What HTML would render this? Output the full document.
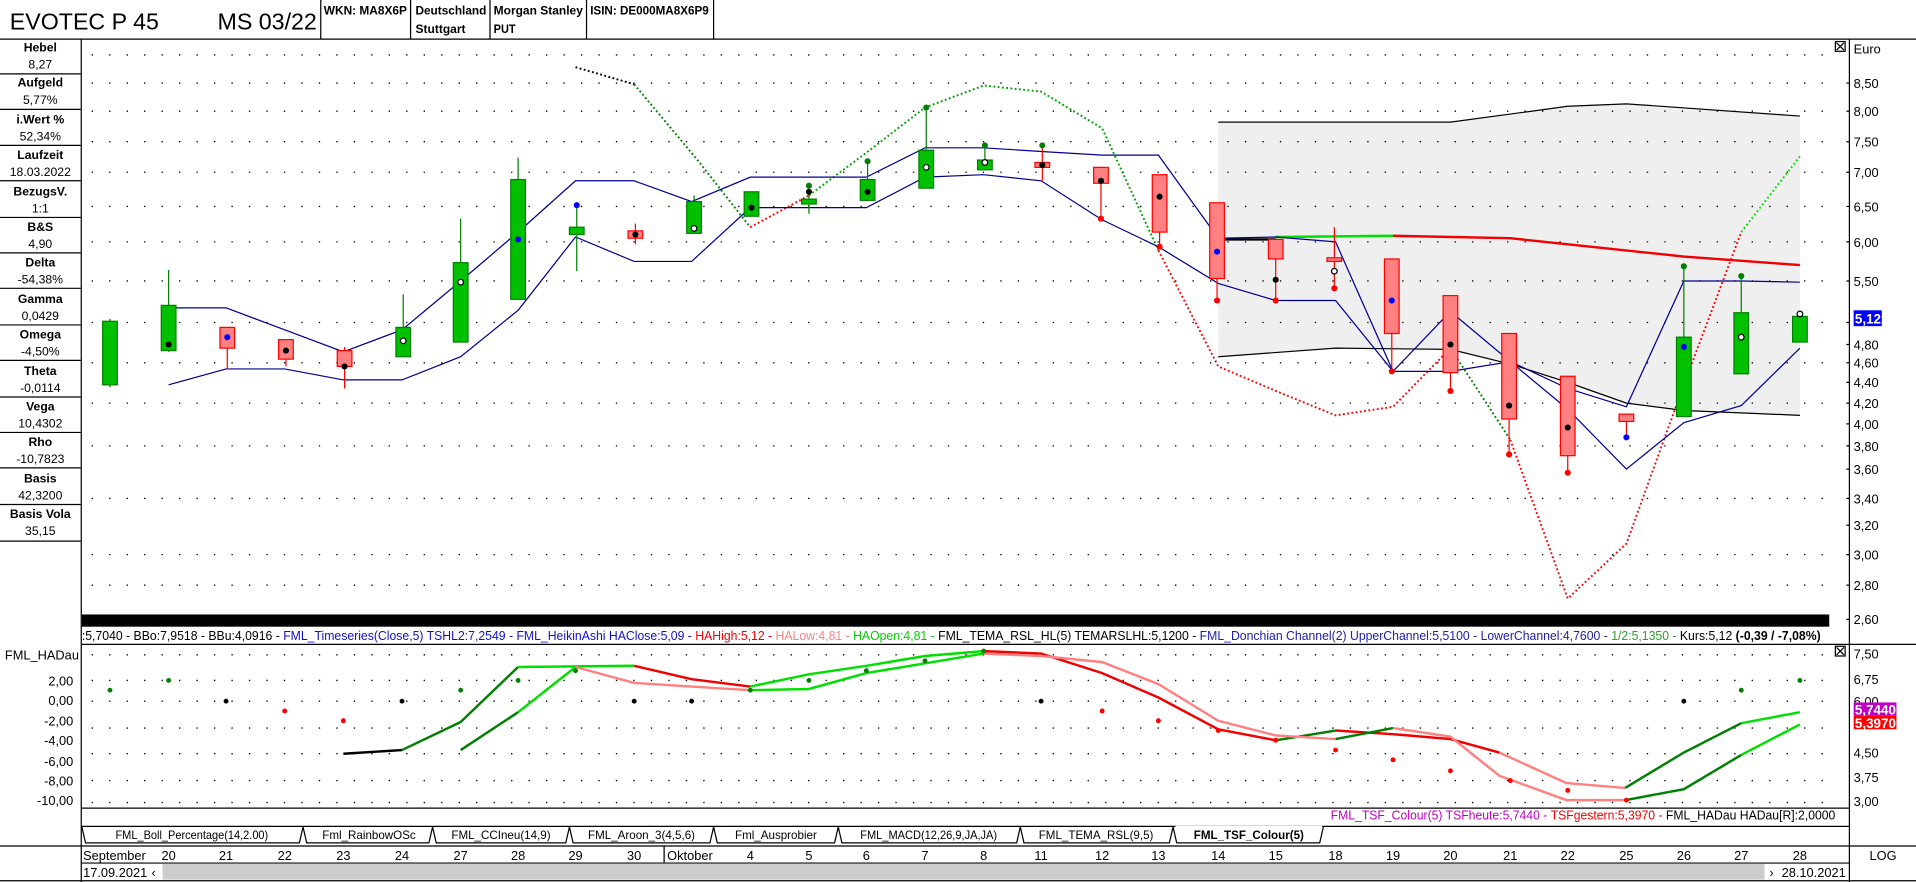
<!DOCTYPE html>
<html><head><meta charset="utf-8"><style>
html,body{margin:0;padding:0;background:#fff;overflow:hidden}
svg{display:block}
text{font-family:"Liberation Sans",Arial,sans-serif}
.n{font-family:"Liberation Sans Narrow","Liberation Sans",sans-serif}
</style></head><body>
<svg width="1916" height="882" viewBox="0 0 1568 722" preserveAspectRatio="none" xmlns="http://www.w3.org/2000/svg">
<rect width="1568" height="722" fill="#fff"/>
<!-- header -->
<text x="8" y="24" font-size="19">EVOTEC P 45</text>
<text x="178" y="24" font-size="19">MS 03/22</text>
<g stroke="#000" stroke-width="1">
<line x1="262.5" y1="0" x2="262.5" y2="32"/><line x1="336" y1="0" x2="336" y2="32"/><line x1="401" y1="0" x2="401" y2="32"/><line x1="480" y1="0" x2="480" y2="32"/><line x1="584" y1="0" x2="584" y2="32"/>
<line x1="0" y1="32" x2="1568" y2="32"/>
</g>
<g font-size="10" font-weight="bold" class="n">
<text x="265" y="12" textLength="68" lengthAdjust="spacingAndGlyphs">WKN: MA8X6P</text>
<text x="340" y="12" textLength="58" lengthAdjust="spacingAndGlyphs">Deutschland</text><text x="340" y="27" textLength="41" lengthAdjust="spacingAndGlyphs">Stuttgart</text>
<text x="404" y="12" textLength="73" lengthAdjust="spacingAndGlyphs">Morgan Stanley</text><text x="404" y="27" textLength="18" lengthAdjust="spacingAndGlyphs">PUT</text>
<text x="483" y="12" textLength="97" lengthAdjust="spacingAndGlyphs">ISIN: DE000MA8X6P9</text>
</g>
<!-- left panel -->
<line x1="66.5" y1="32" x2="66.5" y2="722" stroke="#000"/>
<g font-size="10" text-anchor="middle" class="n">
<g font-weight="bold">
<text x="33" y="42">Hebel</text><text x="33" y="71">Aufgeld</text><text x="33" y="101">i.Wert %</text><text x="33" y="130">Laufzeit</text><text x="33" y="160">BezugsV.</text><text x="33" y="189">B&amp;S</text><text x="33" y="218">Delta</text><text x="33" y="248">Gamma</text><text x="33" y="277">Omega</text><text x="33" y="307">Theta</text><text x="33" y="336">Vega</text><text x="33" y="365">Rho</text><text x="33" y="395">Basis</text><text x="33" y="424">Basis Vola</text>
</g>
<text x="33" y="56">8,27</text><text x="33" y="85">5,77%</text><text x="33" y="115">52,34%</text><text x="33" y="144">18.03.2022</text><text x="33" y="174">1:1</text><text x="33" y="203">4,90</text><text x="33" y="232">-54,38%</text><text x="33" y="262">0,0429</text><text x="33" y="291">-4,50%</text><text x="33" y="321">-0,0114</text><text x="33" y="350">10,4302</text><text x="33" y="379">-10,7823</text><text x="33" y="409">42,3200</text><text x="33" y="438">35,15</text>
</g>
<g stroke="#000">
<line x1="0" y1="60.5" x2="66" y2="60.5"/><line x1="0" y1="89.5" x2="66" y2="89.5"/><line x1="0" y1="119" x2="66" y2="119"/><line x1="0" y1="148" x2="66" y2="148"/><line x1="0" y1="178" x2="66" y2="178"/><line x1="0" y1="207" x2="66" y2="207"/><line x1="0" y1="236" x2="66" y2="236"/><line x1="0" y1="266" x2="66" y2="266"/><line x1="0" y1="295" x2="66" y2="295"/><line x1="0" y1="325" x2="66" y2="325"/><line x1="0" y1="354" x2="66" y2="354"/><line x1="0" y1="383" x2="66" y2="383"/><line x1="0" y1="413" x2="66" y2="413"/><line x1="0" y1="443" x2="66" y2="443"/>
</g>
<!-- bollinger fill -->
<polygon points="997,100 1187,100 1283,87 1331,85 1473,95 1473,340 1378,336 1331,330 1283,313 1236,298 1187,286 1093,285 997,292" fill="#efefef"/>
<!-- dot grid price -->
<g stroke="#000" stroke-width="1.1" stroke-dasharray="1.1 13.2">
<line x1="75" y1="45" x2="1500" y2="45"/><line x1="75" y1="68" x2="1500" y2="68"/><line x1="75" y1="91" x2="1500" y2="91"/><line x1="75" y1="116" x2="1500" y2="116"/><line x1="75" y1="141" x2="1500" y2="141"/><line x1="75" y1="169" x2="1500" y2="169"/><line x1="75" y1="198" x2="1500" y2="198"/><line x1="75" y1="230" x2="1500" y2="230"/><line x1="75" y1="264" x2="1500" y2="264"/><line x1="75" y1="297" x2="1500" y2="297"/><line x1="75" y1="330" x2="1500" y2="330"/><line x1="75" y1="365" x2="1500" y2="365"/><line x1="75" y1="408" x2="1500" y2="408"/><line x1="75" y1="454" x2="1500" y2="454"/><line x1="75" y1="479" x2="1500" y2="479"/>
</g>
<!-- bollinger lines -->
<polyline points="997,100 1187,100 1283,87 1331,85 1473,95" fill="none" stroke="#000"/>
<polyline points="997,292 1093,285 1187,286 1236,298 1283,313 1331,330 1378,336 1473,340" fill="none" stroke="#000"/>
<polyline points="997,196 1044,196" fill="none" stroke="#000" stroke-width="2"/>
<polyline points="1044,194 1140,193" fill="none" stroke="#00e000" stroke-width="2"/>
<polyline points="1140,193 1236,195 1283,200 1378,210 1473,217" fill="none" stroke="#f00000" stroke-width="2"/>
<!-- dotted TSF -->
<g fill="none" stroke-width="1.6" stroke-dasharray="1.5 2">
<polyline points="471,55 519,69" stroke="#000"/>
<polyline points="519,69 570,130 614,186" stroke="#008000"/>
<polyline points="614,186 662,160" stroke="#ff0000"/>
<polyline points="662,160 709,125 757,88 805,70 852,75 902,105 948,205" stroke="#00a000"/>
<polyline points="948,205 997,300 1044,320 1093,340 1140,333 1187,285" stroke="#ff0000"/>
<polyline points="1187,285 1236,360" stroke="#008000"/>
<polyline points="1236,360 1283,490 1331,445 1378,315 1425,190" stroke="#ff0000"/>
<polyline points="1425,190 1473,128" stroke="#00e000"/>
</g>
<!-- donchian -->
<polyline points="138,252 185,252 233,270 281,288 329,270 377,230 424,190 471,148 519,148 566,165 614,145 662,145 709,145 757,121 805,121 852,124 902,127 948,127 997,195 1044,194 1093,198 1140,304 1187,255 1236,296 1283,318 1331,333 1378,230 1425,230 1473,231" fill="none" stroke="#000090"/>
<polyline points="138,315 185,302 233,302 281,311 329,311 377,292 424,254 471,194 519,214 566,214 614,170 662,170 709,170 757,145 805,143 852,148 902,180 948,202 997,232 1044,246 1093,246 1140,304 1187,304 1236,296 1283,335 1331,384 1378,346 1425,332 1473,285" fill="none" stroke="#000090"/>
<!-- candles -->
<g stroke-width="1">
<g stroke="#008000" fill="#00c000">
<line x1="90" y1="261" x2="90" y2="317"/><rect x="84" y="263" width="12" height="52"/>
<line x1="138" y1="221" x2="138" y2="288"/><rect x="132" y="250" width="12" height="37"/>
<line x1="330" y1="241" x2="330" y2="292"/><rect x="324" y="268" width="12" height="24"/>
<line x1="377" y1="179" x2="377" y2="280"/><rect x="371" y="215" width="12" height="65"/>
<line x1="424" y1="129" x2="424" y2="245"/><rect x="418" y="147" width="12" height="98"/>
<line x1="472" y1="167" x2="472" y2="222"/><rect x="466" y="186" width="12" height="6"/>
<line x1="568" y1="160" x2="568" y2="191"/><rect x="562" y="165" width="12" height="26"/>
<rect x="609" y="157" width="12" height="20"/>
<line x1="662" y1="150" x2="662" y2="175"/><rect x="656" y="163" width="12" height="4"/>
<line x1="710" y1="132" x2="710" y2="164"/><rect x="704" y="147" width="12" height="17"/>
<line x1="758" y1="87" x2="758" y2="154"/><rect x="752" y="123" width="12" height="31"/>
<line x1="806" y1="118" x2="806" y2="139"/><rect x="800" y="131" width="12" height="8"/>
<line x1="1378" y1="218" x2="1378" y2="341"/><rect x="1372" y="276" width="12" height="65"/>
<line x1="1425" y1="226" x2="1425" y2="306"/><rect x="1419" y="256" width="12" height="50"/>
<rect x="1467" y="259" width="12" height="21"/>
</g>
<g stroke="#ff0000" fill="#ff8080">
<line x1="186" y1="268" x2="186" y2="302"/><rect x="180" y="268" width="12" height="17"/>
<line x1="234" y1="278" x2="234" y2="300"/><rect x="228" y="278" width="12" height="16"/>
<line x1="282" y1="284" x2="282" y2="318"/><rect x="276" y="287" width="12" height="13"/>
<line x1="520" y1="183" x2="520" y2="200"/><rect x="514" y="189" width="12" height="6"/>
<line x1="853" y1="118" x2="853" y2="148"/><rect x="847" y="133" width="12" height="4"/>
<line x1="901" y1="137" x2="901" y2="179"/><rect x="895" y="137" width="12" height="13"/>
<line x1="949" y1="143" x2="949" y2="202"/><rect x="943" y="143" width="12" height="47"/>
<line x1="996" y1="166" x2="996" y2="246"/><rect x="990" y="166" width="12" height="62"/>
<line x1="1044" y1="196" x2="1044" y2="246"/><rect x="1038" y="196" width="12" height="16"/>
<line x1="1092" y1="186" x2="1092" y2="236"/><rect x="1086" y="211" width="12" height="3"/>
<line x1="1139" y1="212" x2="1139" y2="304"/><rect x="1133" y="212" width="12" height="61"/>
<line x1="1187" y1="242" x2="1187" y2="320"/><rect x="1181" y="242" width="12" height="63"/>
<line x1="1235" y1="273" x2="1235" y2="372"/><rect x="1229" y="273" width="12" height="70"/>
<line x1="1283" y1="308" x2="1283" y2="387"/><rect x="1277" y="308" width="12" height="65"/>
<line x1="1331" y1="339" x2="1331" y2="358"/><rect x="1325" y="339" width="12" height="6"/>
</g>
</g>
<!-- dots -->
<g>
<circle cx="138" cy="282" r="2.5" fill="#000"/><circle cx="186" cy="276" r="2.5" fill="#00f"/><circle cx="234" cy="287" r="2.5" fill="#000"/><circle cx="282" cy="300" r="2.5" fill="#000"/>
<circle cx="330" cy="279" r="2.3" fill="#fff" stroke="#000"/><circle cx="377" cy="231" r="2.3" fill="#fff" stroke="#000"/><circle cx="424" cy="196" r="2.5" fill="#00f"/><circle cx="472" cy="168" r="2.5" fill="#00f"/>
<circle cx="520" cy="192" r="2.5" fill="#000"/><circle cx="568" cy="187" r="2.3" fill="#fff" stroke="#000"/><circle cx="615" cy="170" r="2.5" fill="#000"/><circle cx="662" cy="157" r="2.5" fill="#000"/><circle cx="662" cy="152" r="2.5" fill="#008000"/>
<circle cx="710" cy="157" r="2.5" fill="#000"/><circle cx="710" cy="132" r="2.5" fill="#008000"/><circle cx="758" cy="137" r="2.3" fill="#fff" stroke="#000"/><circle cx="758" cy="88" r="2.5" fill="#008000"/>
<circle cx="806" cy="133" r="2.3" fill="#fff" stroke="#000"/><circle cx="806" cy="119" r="2.5" fill="#008000"/><circle cx="853" cy="135" r="2.5" fill="#000"/><circle cx="853" cy="119" r="2.5" fill="#008000"/>
<circle cx="901" cy="148" r="2.5" fill="#000"/><circle cx="901" cy="179" r="2.5" fill="#f00"/><circle cx="949" cy="161" r="2.5" fill="#000"/><circle cx="949" cy="202" r="2.5" fill="#f00"/>
<circle cx="996" cy="206" r="2.5" fill="#00f"/><circle cx="996" cy="246" r="2.5" fill="#f00"/><circle cx="1044" cy="229" r="2.5" fill="#000"/><circle cx="1044" cy="246" r="2.5" fill="#f00"/>
<circle cx="1092" cy="222" r="2.3" fill="#fff" stroke="#000"/><circle cx="1092" cy="236" r="2.5" fill="#f00"/><circle cx="1139" cy="246" r="2.5" fill="#00f"/><circle cx="1139" cy="304" r="2.5" fill="#f00"/>
<circle cx="1187" cy="282" r="2.5" fill="#000"/><circle cx="1187" cy="320" r="2.5" fill="#f00"/><circle cx="1235" cy="332" r="2.5" fill="#000"/><circle cx="1235" cy="372" r="2.5" fill="#f00"/>
<circle cx="1283" cy="350" r="2.5" fill="#000"/><circle cx="1283" cy="387" r="2.5" fill="#f00"/><circle cx="1331" cy="358" r="2.5" fill="#00f"/>
<circle cx="1378" cy="284" r="2.5" fill="#00f"/><circle cx="1378" cy="218" r="2.5" fill="#008000"/><circle cx="1425" cy="276" r="2.3" fill="#fff" stroke="#000"/><circle cx="1425" cy="226" r="2.5" fill="#008000"/><circle cx="1473" cy="257" r="2.3" fill="#fff" stroke="#000"/>
</g>
<!-- black bar and legend -->
<rect x="67" y="503" width="1430" height="10" fill="#000"/>
<text x="67" y="524" font-size="10.5" textLength="1423" lengthAdjust="spacingAndGlyphs"><tspan fill="#000">:5,7040 - BBo:7,9518 - BBu:4,0916 - </tspan><tspan fill="#1010d0">FML_Timeseries(Close,5) TSHL2:7,2549 - FML_HeikinAshi HAClose:5,09 - </tspan><tspan fill="#f00000">HAHigh:5,12 - </tspan><tspan fill="#ff8080">HALow:4,81 - </tspan><tspan fill="#00d000">HAOpen:4,81 - </tspan><tspan fill="#000">FML_TEMA_RSL_HL(5) TEMARSLHL:5,1200 - </tspan><tspan fill="#2020b0">FML_Donchian Channel(2) UpperChannel:5,5100 - LowerChannel:4,7600 - </tspan><tspan fill="#30a030">1/2:5,1350 - </tspan><tspan fill="#000">Kurs:5,12 </tspan><tspan fill="#000" font-weight="bold">(-0,39 / -7,08%)</tspan></text>
<line x1="67" y1="527.5" x2="1568" y2="527.5" stroke="#000"/>
<!-- right axis -->
<line x1="1513.5" y1="32" x2="1513.5" y2="722" stroke="#000"/>
<g stroke="#000"><rect x="1502" y="34" width="8" height="8" fill="#fff"/><path d="M1503,35 L1509,41 M1509,35 L1503,41"/><rect x="1502" y="529" width="8" height="8" fill="#fff"/><path d="M1503,530 L1509,536 M1509,530 L1503,536"/></g>
<g font-size="10.5" fill="#000">
<text x="1517" y="44">Euro</text>
<text x="1517" y="72">8,50</text><text x="1517" y="95">8,00</text><text x="1517" y="120">7,50</text><text x="1517" y="145">7,00</text><text x="1517" y="173">6,50</text><text x="1517" y="202">6,00</text><text x="1517" y="234">5,50</text><text x="1517" y="286">4,80</text><text x="1517" y="301">4,60</text><text x="1517" y="317">4,40</text><text x="1517" y="334">4,20</text><text x="1517" y="351">4,00</text><text x="1517" y="369">3,80</text><text x="1517" y="388">3,60</text><text x="1517" y="412">3,40</text><text x="1517" y="434">3,20</text><text x="1517" y="458">3,00</text><text x="1517" y="483">2,80</text><text x="1517" y="511">2,60</text>
</g>
<g stroke="#000"><path d="M1511,68H1514 M1511,91H1514 M1511,116H1514 M1511,141H1514 M1511,169H1514 M1511,198H1514 M1511,230H1514 M1511,264H1514 M1511,282H1514 M1511,297H1514 M1511,313H1514 M1511,330H1514 M1511,347H1514 M1511,365H1514 M1511,384H1514 M1511,408H1514 M1511,430H1514 M1511,454H1514 M1511,479H1514 M1511,507H1514"/></g>
<rect x="1517" y="254" width="23" height="13" fill="#0000ff"/>
<text x="1518" y="265" font-size="11" font-weight="bold" fill="#fff">5,12</text>
<!-- lower panel -->
<text x="4" y="540" font-size="10.5">FML_HADau</text>
<g font-size="10.5" text-anchor="end">
<text x="60" y="561">2,00</text><text x="60" y="577">0,00</text><text x="60" y="594">-2,00</text><text x="60" y="610">-4,00</text><text x="60" y="627">-6,00</text><text x="60" y="643">-8,00</text><text x="60" y="659">-10,00</text>
</g>
<g font-size="10.5">
<text x="1517" y="539">7,50</text><text x="1517" y="560">6,75</text><text x="1517" y="578">6,00</text><text x="1517" y="620">4,50</text><text x="1517" y="640">3,75</text><text x="1517" y="660">3,00</text>
</g>
<rect x="1517" y="575" width="35" height="11" fill="#c000c0"/><text x="1518" y="585" font-size="11" font-weight="bold" fill="#fff">5,7440</text>
<rect x="1517" y="586" width="35" height="11" fill="#ff0000"/><text x="1518" y="596" font-size="11" font-weight="bold" fill="#fff">5,3970</text>
<g stroke="#000" stroke-width="1.1" stroke-dasharray="1.1 13.2">
<line x1="75" y1="536" x2="1500" y2="536"/><line x1="75" y1="557" x2="1500" y2="557"/><line x1="75" y1="574" x2="1500" y2="574"/><line x1="75" y1="596" x2="1500" y2="596"/><line x1="75" y1="617" x2="1500" y2="617"/><line x1="75" y1="639" x2="1500" y2="639"/><line x1="75" y1="657" x2="1500" y2="657"/>
</g>
<g fill="none" stroke-width="2">
<polyline points="281,617 329,614" stroke="#000"/>
<polyline points="329,614 377,591 424,546" stroke="#008000"/>
<polyline points="424,546 519,545" stroke="#00e000"/>
<polyline points="519,545 566,556 614,562" stroke="#f00000"/>
<polyline points="614,562 662,552 709,545 757,537 805,533" stroke="#00e000"/>
<polyline points="805,533 852,535 902,551 948,571 997,597 1044,606" stroke="#f00000"/>
<polyline points="1044,606 1093,598" stroke="#008000"/>
<polyline points="1093,598 1140,601 1187,605 1227,616" stroke="#f00000"/>
<polyline points="1227,616 1282,641 1330,645" stroke="#ff8080"/>
<polyline points="1330,645 1378,616 1425,592" stroke="#008000"/>
<polyline points="1425,592 1473,583" stroke="#00e000"/>
<polyline points="377,614 424,583" stroke="#008000"/>
<polyline points="424,583 471,546" stroke="#00e000"/>
<polyline points="471,546 519,559 566,562 614,565" stroke="#ff8080"/>
<polyline points="614,565 662,564 709,551 757,543 805,535" stroke="#00e000"/>
<polyline points="805,535 852,537 902,542 948,560 997,590 1044,602 1093,605" stroke="#ff8080"/>
<polyline points="1093,605 1140,596" stroke="#008000"/>
<polyline points="1140,596 1187,603 1227,635 1282,655 1330,655" stroke="#ff8080"/>
<polyline points="1330,655 1378,646 1425,618" stroke="#008000"/>
<polyline points="1425,618 1473,593" stroke="#00e000"/>
</g>
<g>
<circle cx="90" cy="565" r="2" fill="#008000"/><circle cx="138" cy="557" r="2" fill="#008000"/><circle cx="185" cy="574" r="2" fill="#000"/><circle cx="233" cy="582" r="2" fill="#f00"/><circle cx="281" cy="590" r="2" fill="#f00"/><circle cx="329" cy="574" r="2" fill="#000"/><circle cx="377" cy="565" r="2" fill="#008000"/><circle cx="424" cy="557" r="2" fill="#008000"/><circle cx="471" cy="549" r="2" fill="#008000"/><circle cx="519" cy="574" r="2" fill="#000"/><circle cx="566" cy="574" r="2" fill="#000"/><circle cx="614" cy="565" r="2" fill="#008000"/><circle cx="662" cy="557" r="2" fill="#008000"/><circle cx="709" cy="549" r="2" fill="#008000"/><circle cx="757" cy="541" r="2" fill="#008000"/><circle cx="805" cy="533" r="2" fill="#008000"/><circle cx="852" cy="574" r="2" fill="#000"/><circle cx="902" cy="582" r="2" fill="#f00"/><circle cx="948" cy="590" r="2" fill="#f00"/><circle cx="997" cy="598" r="2" fill="#f00"/><circle cx="1044" cy="606" r="2" fill="#f00"/><circle cx="1093" cy="614" r="2" fill="#f00"/><circle cx="1140" cy="622" r="2" fill="#f00"/><circle cx="1187" cy="631" r="2" fill="#f00"/><circle cx="1236" cy="639" r="2" fill="#f00"/><circle cx="1283" cy="647" r="2" fill="#f00"/><circle cx="1331" cy="655" r="2" fill="#f00"/><circle cx="1378" cy="574" r="2" fill="#000"/><circle cx="1425" cy="565" r="2" fill="#008000"/><circle cx="1473" cy="557" r="2" fill="#008000"/>
</g>
<line x1="67" y1="661.5" x2="1514" y2="661.5" stroke="#000"/>
<text x="1089" y="671" font-size="10.5" textLength="413" lengthAdjust="spacingAndGlyphs"><tspan fill="#c000c0">FML_TSF_Colour(5) TSFheute:5,7440 - </tspan><tspan fill="#f00000">TSFgestern:5,3970 - </tspan><tspan fill="#000">FML_HADau HADau[R]:2,0000</tspan></text>
<!-- tabs -->
<line x1="67" y1="676.5" x2="1514" y2="676.5" stroke="#000"/>
<rect x="962" y="676" width="120" height="14" fill="#fff"/>
<g stroke="#000" fill="none">
<path d="M67,677 L70,690 L245,690 L248,677 M248,677 L251,690 L351,690 L354,677 M354,677 L357,690 L463,690 L466,677 M466,677 L469,690 L581,690 L584,677 M584,677 L587,690 L683,690 L686,677 M686,677 L689,690 L832,690 L835,677 M835,677 L838,690 L957,690 L960,677 M960,677 L963,690 L1080,690 L1083,677"/>
</g>
<g font-size="9.5" text-anchor="middle" class="n">
<text x="157" y="687" textLength="125" lengthAdjust="spacingAndGlyphs">FML_Boll_Percentage(14,2.00)</text><text x="302" y="687">Fml_RainbowOSc</text><text x="410" y="687">FML_CCIneu(14,9)</text><text x="525" y="687">FML_Aroon_3(4,5,6)</text><text x="635" y="687">Fml_Ausprobier</text><text x="760" y="687" textLength="112" lengthAdjust="spacingAndGlyphs">FML_MACD(12,26,9,JA,JA)</text><text x="897" y="687">FML_TEMA_RSL(9,5)</text><text x="1022" y="687" font-weight="bold">FML_TSF_Colour(5)</text>
</g>
<line x1="0" y1="692.5" x2="1568" y2="692.5" stroke="#000"/>
<line x1="67" y1="706.5" x2="1514" y2="706.5" stroke="#000"/>
<line x1="543.5" y1="692" x2="543.5" y2="706" stroke="#000"/>
<g font-size="10.5" class="n" text-anchor="middle">
<text x="68" y="704" text-anchor="start">September</text>
<text x="138" y="704">20</text><text x="185" y="704">21</text><text x="233" y="704">22</text><text x="281" y="704">23</text><text x="329" y="704">24</text><text x="377" y="704">27</text><text x="424" y="704">28</text><text x="471" y="704">29</text><text x="519" y="704">30</text><text x="546" y="704" text-anchor="start">Oktober</text><text x="614" y="704">4</text><text x="662" y="704">5</text><text x="709" y="704">6</text><text x="757" y="704">7</text><text x="805" y="704">8</text><text x="852" y="704">11</text><text x="902" y="704">12</text><text x="948" y="704">13</text><text x="997" y="704">14</text><text x="1044" y="704">15</text><text x="1093" y="704">18</text><text x="1140" y="704">19</text><text x="1187" y="704">20</text><text x="1236" y="704">21</text><text x="1283" y="704">22</text><text x="1331" y="704">25</text><text x="1378" y="704">26</text><text x="1425" y="704">27</text><text x="1473" y="704">28</text>
<text x="1541" y="704">LOG</text>
</g>
<rect x="133" y="707" width="1311" height="13" fill="#cccccc"/>
<g font-size="10.5" class="n">
<text x="68" y="718">17.09.2021</text><text x="124" y="718">‹</text><text x="1448" y="718">›</text><text x="1458" y="718">28.10.2021</text>
</g>
<line x1="0" y1="721" x2="1568" y2="721" stroke="#000"/>
</svg>
</body></html>
